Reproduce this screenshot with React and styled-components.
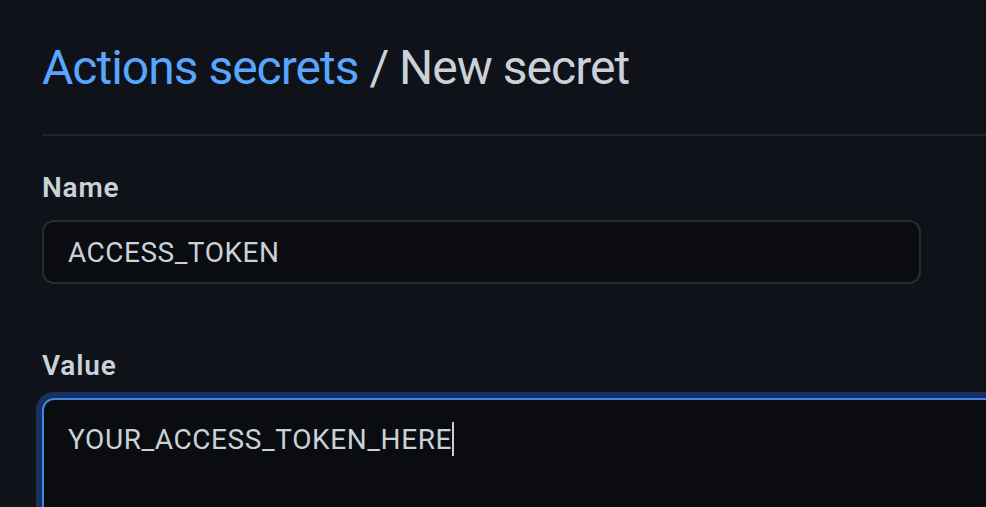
import React from "react";
import styled, { createGlobalStyle } from "styled-components";

const GlobalStyle = createGlobalStyle`
  html, body {
    margin: 0;
    padding: 0;
    background: #0f1218;
    overflow: hidden;
  }
  body {
    font-family: Roboto, "Noto Sans", "Liberation Sans", sans-serif;
    color: #c9d1d9;
  }
`;

function App() {
  return (
    <Page>
      <GlobalStyle />
      <Header>
        <Title>
          <Crumb href="#">Actions secrets</Crumb> / New secret
        </Title>
      </Header>
      <Field>
        <Label>Name</Label>
        <Input defaultValue="ACCESS_TOKEN" readOnly />
      </Field>
      <Field $wide>
        <Label>Value</Label>
        <TextArea>
          YOUR_ACCESS_TOKEN_HERE
          <Caret />
        </TextArea>
      </Field>
    </Page>
  );
}

export default App;

const Page = styled.div`
  padding: 38px 0 0 42px;
  width: 1900px;
`;

const Header = styled.div`
  border-bottom: 2px solid #21262d;
  padding-bottom: 36px;
`;

const Title = styled.h1`
  margin: 0;
  font-size: 48px;
  font-weight: 400;
  line-height: 60px;
  letter-spacing: -1px;
  color: #c9d1d9;
`;

const Crumb = styled.a`
  color: #58a6ff;
  text-decoration: none;
`;

const Field = styled.div`
  display: flex;
  flex-direction: column;
  margin-top: ${(p) => (p.$wide ? "62px" : "32px")};
`;

const Label = styled.label`
  font-size: 28px;
  font-weight: 600;
  line-height: 40px;
  letter-spacing: 0.8px;
  color: #c9d1d9;
  margin-bottom: 12px;
`;

const Input = styled.input`
  box-sizing: border-box;
  width: 879px;
  height: 64px;
  padding: 0 24px;
  border: 2px solid #272c33;
  border-radius: 12px;
  background: #0a0c10;
  color: #c9d1d9;
  font-family: inherit;
  font-size: 28px;
  letter-spacing: 0.5px;
  outline: none;
`;

const TextArea = styled.div`
  box-sizing: border-box;
  width: 1700px;
  height: 200px;
  padding: 20px 24px;
  border: 2px solid #4184e4;
  border-radius: 12px;
  background: #0a0c10;
  box-shadow: 0 0 0 6px #18305f;
  color: #c9d1d9;
  font-size: 28px;
  line-height: 40px;
  letter-spacing: 0.6px;
`;

const Caret = styled.span`
  display: inline-block;
  width: 2px;
  height: 34px;
  background: #c9d1d9;
  vertical-align: -7px;
`;
